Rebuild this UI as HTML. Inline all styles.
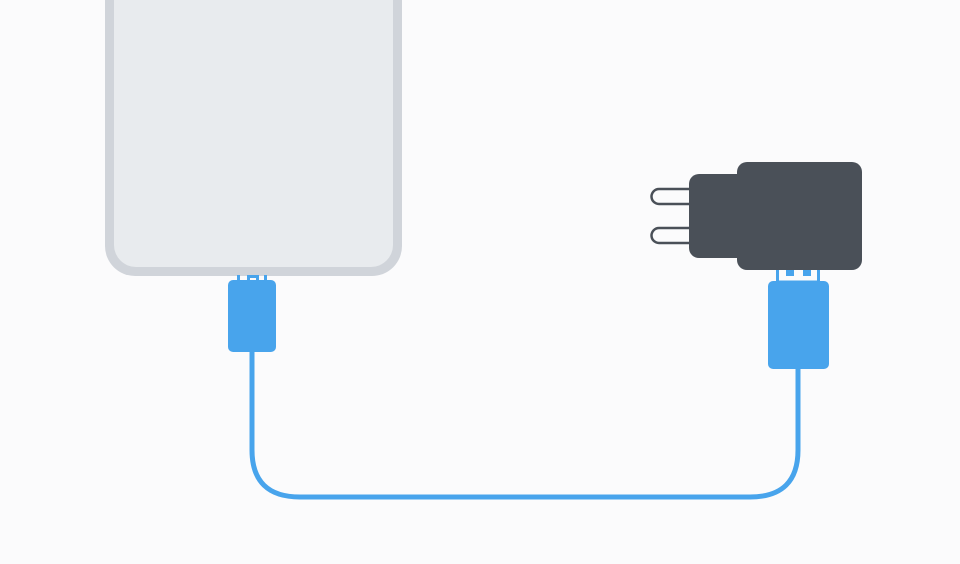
<!DOCTYPE html>
<html><head><meta charset="utf-8"><style>
html,body{margin:0;padding:0;background:#fbfbfc;width:960px;height:564px;overflow:hidden}
</style></head><body>
<svg width="960" height="564" viewBox="0 0 960 564" xmlns="http://www.w3.org/2000/svg">
<rect width="960" height="564" fill="#fbfbfc"/>
<!-- phone -->
<rect x="105" y="-40" width="297" height="316" rx="30" fill="#d0d4da"/>
<rect x="114" y="-40" width="279" height="307" rx="22" fill="#e8ebee"/>
<!-- left connector pins -->
<path d="M238.5 275 V281 M248.5 275 V281 M257.5 275 V281 M265.5 275 V281 M248 276.5 H258" stroke="#48a4ec" stroke-width="3" fill="none"/>
<!-- cable -->
<path d="M252 350 V450 Q252 497 300 497 H750 Q798 497 798 450 V366" stroke="#48a4ec" stroke-width="5" fill="none"/>
<!-- left plug -->
<rect x="228" y="280" width="48" height="72" rx="5" fill="#48a4ec"/>
<!-- usb metal -->
<rect x="777.5" y="262" width="41" height="20" fill="#fbfbfc" stroke="#48a4ec" stroke-width="3"/>
<rect x="786" y="270" width="8" height="6" fill="#48a4ec"/>
<rect x="803" y="270" width="8" height="6" fill="#48a4ec"/>
<!-- prongs -->
<path d="M692 189 H659 A7.5 7.5 0 0 0 659 204 H692 M692 228 H659 A7.5 7.5 0 0 0 659 243 H692" stroke="#4a5058" stroke-width="2.5" fill="none"/>
<!-- charger body -->
<rect x="689" y="174" width="60" height="84" rx="10" fill="#4a5058"/>
<rect x="737" y="162" width="125" height="108" rx="10" fill="#4a5058"/>
<!-- right plug -->
<rect x="768" y="281" width="61" height="88" rx="5" fill="#48a4ec"/>
</svg>
</body></html>
